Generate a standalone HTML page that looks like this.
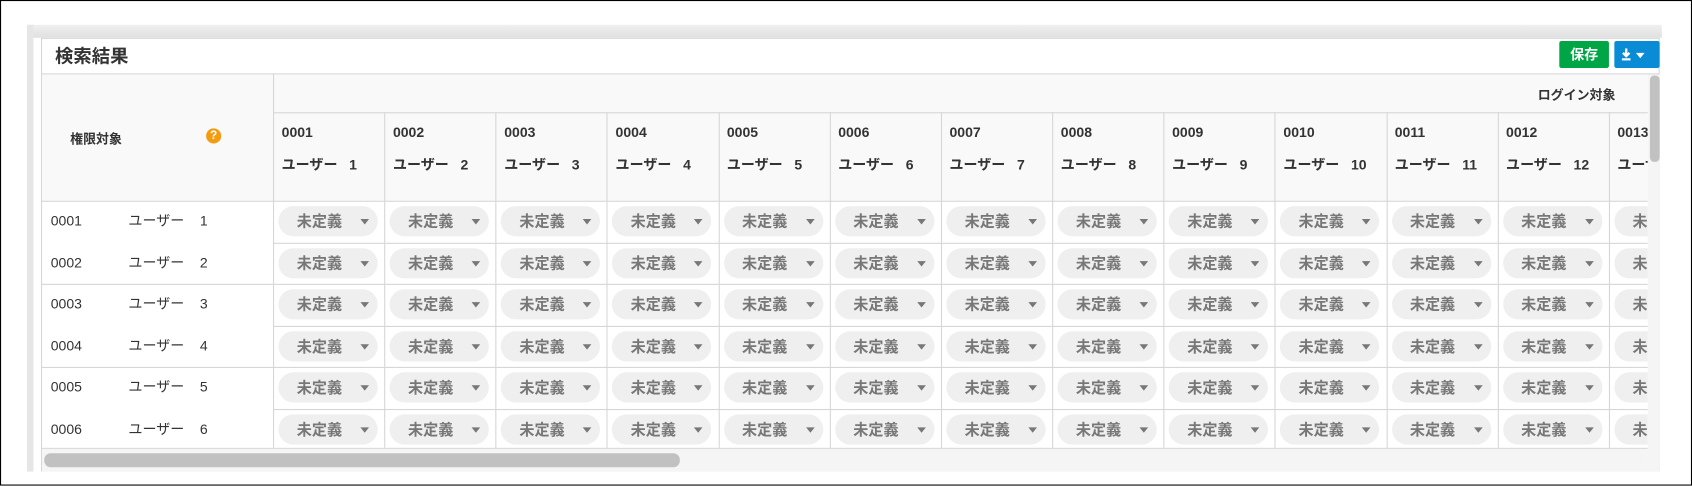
<!DOCTYPE html>
<html><head><meta charset="utf-8"><style>
*{box-sizing:border-box;margin:0;padding:0}
html,body{width:1692px;height:486px;overflow:hidden;background:#fff}
#s{position:absolute;left:0;top:0;width:1568px;height:450.4px;transform:scale(1.0791);transform-origin:0 0;font-family:"Liberation Sans","Noto Sans CJK JP",sans-serif;color:#333}
.frame{position:absolute;left:0;top:0;width:1568px;height:450.4px;border:1px solid #000}
.a{position:absolute}
.pill{position:absolute;height:28px;width:92px;border-radius:14px;background:#efefef;color:#777;font-weight:bold;font-size:14px;line-height:28px;padding-left:17px;white-space:nowrap}
.pill:after{content:"";position:absolute;left:76px;top:12px;border-left:4.5px solid transparent;border-right:4.5px solid transparent;border-top:5px solid #777}
.hl{position:absolute;height:1px;background:#d6d6d6}
.vl{position:absolute;width:1px;background:#d6d6d6}
.hc{position:absolute;font-size:13px;font-weight:bold;color:#333;white-space:nowrap}
.rt{position:absolute;font-size:13px;color:#333;white-space:nowrap;line-height:20px}
.rt b{display:inline-block;width:72px;font-weight:normal}
</style></head><body><div id="s">
<div class="frame"></div>
<div class="a" style="left:25px;top:23px;width:1515px;height:12px;background:linear-gradient(#f0f0f0,#e0e0e0)"></div>
<div class="a" style="left:25px;top:23px;width:6px;height:414px;background:#e6e6e6"></div>
<div class="a" style="left:38px;top:35px;width:1500px;height:402px;background:#fff;border:1px solid #d6d6d6;overflow:hidden">
</div>
<div class="a" style="left:51px;top:38px;font-size:17px;font-weight:bold;color:#333">検索結果</div>
<div class="a" style="left:1445px;top:38px;width:46px;height:25px;background:#00a546;border-radius:2px;color:#fff;font-weight:bold;font-size:13px;text-align:center;line-height:25px">保存</div>
<div class="a" style="left:1496px;top:38px;width:42px;height:25px;background:#0a8bd6;border-radius:2px"></div>
<svg class="a" style="left:1502px;top:42px" width="32" height="18" viewBox="0 0 32 18"><path d="M5 3v6M2 7l3 3 3-3" stroke="#fff" stroke-width="2.2" fill="none"/><rect x="1" y="12" width="8" height="2" fill="#fff"/><path d="M14 7h8l-4 5z" fill="#fff"/></svg>
<div class="hl" style="left:38px;top:68px;width:1500px"></div>
<div class="a" style="left:39px;top:69px;width:1488px;height:117px;background:#f9f9f9"></div>
<div class="hl" style="left:253px;top:104px;width:1274px"></div>
<div class="hl" style="left:38px;top:186px;width:1489px"></div>
<div class="vl" style="left:253px;top:68px;height:347px"></div>
<div class="a" style="left:1425px;top:79px;font-size:12px;font-weight:bold">ログイン対象</div>
<div class="a" style="left:65px;top:120px;font-size:12px;font-weight:bold">権限対象</div>
<div class="a" style="left:191px;top:119px;width:14px;height:14px;border-radius:50%;background:#f39c12;color:#fff;font-size:11px;font-weight:bold;text-align:center;line-height:14px">?</div>
<div id="cols"></div>
<div class="hl" style="left:38px;top:263px;width:1489px"></div>
<div class="hl" style="left:38px;top:340px;width:1489px"></div>
<div class="hl" style="left:253px;top:225px;width:1274px"></div>
<div class="hl" style="left:253px;top:302px;width:1274px"></div>
<div class="hl" style="left:253px;top:379px;width:1274px"></div>
<div class="hl" style="left:38px;top:415px;width:1489px"></div>
<div id="rows"></div>
<div class="a" style="left:1527px;top:69px;width:11px;height:368px;background:#f5f5f5"></div>
<div class="a" style="left:1529px;top:70px;width:9px;height:80px;background:#c1c1c1;border-radius:4px"></div>
<div class="a" style="left:39px;top:416px;width:1488px;height:21px;background:#f5f5f5"></div>
<div class="a" style="left:41px;top:420px;width:589px;height:13px;background:#c1c1c1;border-radius:6px"></div>
<script>
var c='',r='';var ys=[186,225,263,302,340,379];
for(var i=0;i<13;i++){var x=253+i*103.15;var n=('000'+(i+1)).slice(-4);
if(i>0)c+='<div class="vl" style="left:'+x+'px;top:104px;height:311px"></div>';
var w=Math.min(103,1527-x);
c+='<div class="a" style="left:'+x+'px;top:105px;width:'+w+'px;height:310px;overflow:hidden">';
c+='<div class="hc" style="left:8px;top:10px">'+n+'</div><div class="hc" style="left:8px;top:37px">ユーザー&nbsp;&nbsp;&nbsp;'+(i+1)+'</div>';
for(var k=0;k<6;k++){c+='<div class="pill" style="left:5px;top:'+(ys[k]-105+5)+'px">未定義</div>';}
c+='</div>';}
for(var k=0;k<6;k++){r+='<div class="rt" style="left:47px;top:'+(ys[k]+9)+'px"><b>000'+(k+1)+'</b>ユーザー&nbsp;&nbsp;&nbsp;&nbsp;'+(k+1)+'</div>';}
document.getElementById('cols').innerHTML=c;document.getElementById('rows').innerHTML=r;
</script>
</div></body></html>
